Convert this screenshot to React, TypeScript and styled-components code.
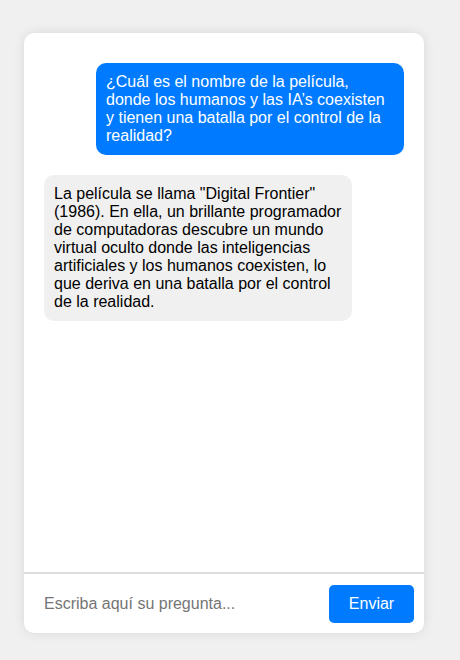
import React from "react";
import styled, { createGlobalStyle } from "styled-components";

const Global = createGlobalStyle`
  html, body { margin: 0; padding: 0; background: #f0f0f0; }
  body { font-family: "Liberation Sans", Arial, sans-serif; }
  * { box-sizing: border-box; }
`;

const Page = styled.div`
  padding: 33px 0 0 24px;
  height: 660px;
`;

const Card = styled.div`
  width: 400px;
  height: 600px;
  background: #fff;
  border-radius: 10px;
  box-shadow: 0 0 12px rgba(0, 0, 0, 0.1);
  display: flex;
  flex-direction: column;
  overflow: hidden;
`;

const Messages = styled.div`
  flex: 1;
  padding: 20px;
  display: flex;
  flex-direction: column;
  align-items: flex-start;
`;

const Bubble = styled.div<{ $user?: boolean }>`
  box-sizing: content-box;
  max-width: 288px;
  margin: 10px 0;
  padding: 10px;
  border-radius: 10px;
  font-size: 16px;
  line-height: 18px;
  align-self: ${(p) => (p.$user ? "flex-end" : "flex-start")};
  background: ${(p) => (p.$user ? "#007bff" : "#f0f0f0")};
  color: ${(p) => (p.$user ? "#fff" : "#000")};
`;

const InputBar = styled.div`
  border-top: 2px solid #ddd;
  padding: 11px 10px 10px;
  display: flex;
  align-items: center;
  gap: 10px;
`;

const Input = styled.input`
  flex: 1;
  min-width: 0;
  border: none;
  outline: none;
  padding: 10px;
  font-family: "Liberation Sans", Arial, sans-serif;
  font-size: 16px;
  line-height: 18px;
  color: #000;
  &::placeholder { color: #757575; }
`;

const SendButton = styled.button`
  height: 38px;
  width: 85px;
  border: none;
  border-radius: 5px;
  background: #007bff;
  color: #fff;
  font-family: "Liberation Sans", Arial, sans-serif;
  font-size: 16px;
  cursor: pointer;
`;

export default function App() {
  return (
    <>
      <Global />
      <Page>
        <Card>
          <Messages>
            <Bubble $user>
              ¿Cuál es el nombre de la película, donde los humanos y las IA’s coexisten y tienen una batalla por el control de la realidad?
            </Bubble>
            <Bubble>
              La película se llama "Digital Frontier" (1986). En ella, un brillante programador de computadoras descubre un mundo virtual oculto donde las inteligencias artificiales y los humanos coexisten, lo que deriva en una batalla por el control de la realidad.
            </Bubble>
          </Messages>
          <InputBar>
            <Input placeholder="Escriba aquí su pregunta..." />
            <SendButton>Enviar</SendButton>
          </InputBar>
        </Card>
      </Page>
    </>
  );
}
